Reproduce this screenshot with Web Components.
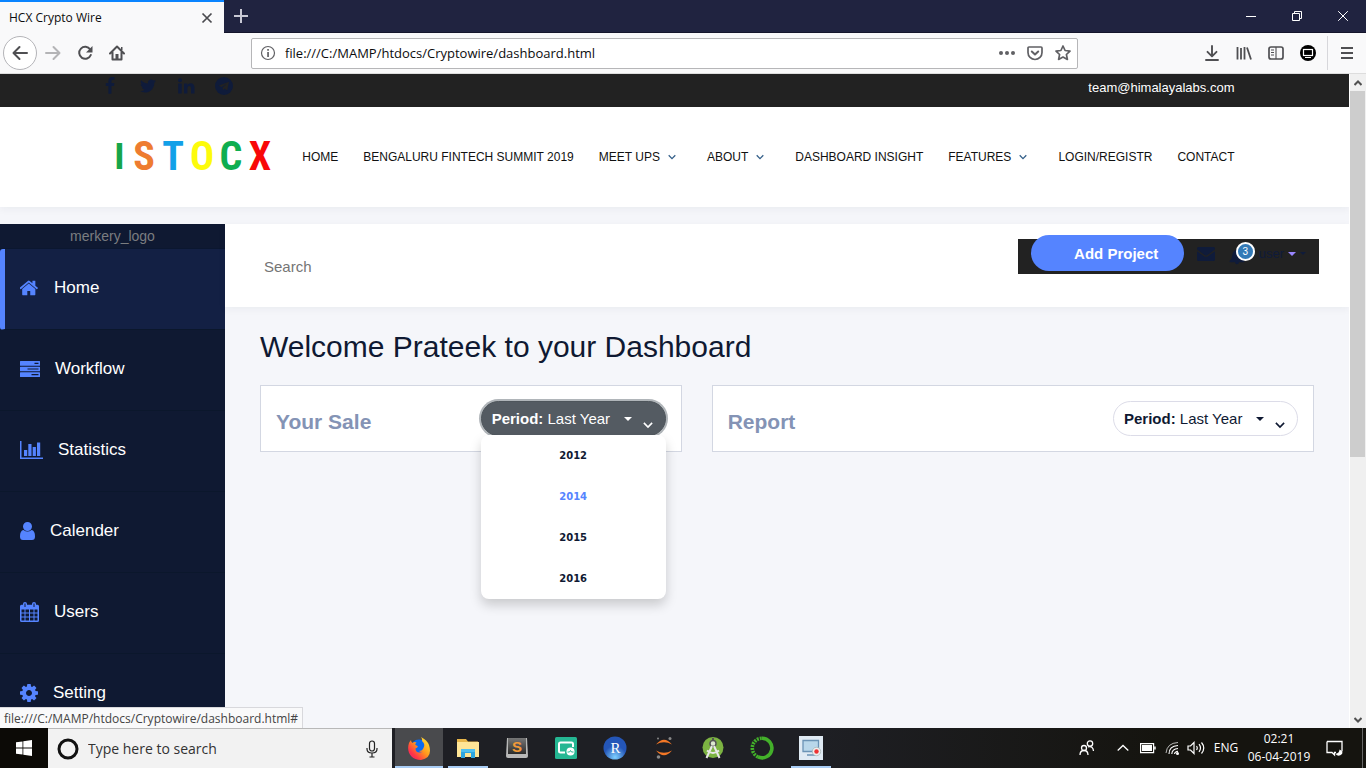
<!DOCTYPE html>
<html lang="en">
<head>
<meta charset="utf-8">
<title>HCX Crypto Wire</title>
<style>
html,body{margin:0;height:100%;overflow:hidden}
body{font-family:"Liberation Sans",Arial,sans-serif;--ui:"Open Sans","Noto Sans",sans-serif;--navy:#0f1932;--blue:#5584ff;--dark:#222}
</style>
</head>
<body>
<desktop-screen>
  <browser-tabs slot="tabs" label="HCX Crypto Wire"></browser-tabs>
  <browser-toolbar slot="toolbar" url="file:///C:/MAMP/htdocs/Cryptowire/dashboard.html"></browser-toolbar>
  <contact-bar slot="page" email="team@himalayalabs.com"></contact-bar>
  <site-nav slot="page"></site-nav>
  <dashboard-layout slot="page">
    <side-menu slot="side"></side-menu>
    <user-bar slot="main"></user-bar>
    <dashboard-board slot="main">
      <span slot="title">Welcome Prateek to your Dashboard</span>
      <report-card heading="Your Sale" open></report-card>
      <report-card heading="Report"></report-card>
    </dashboard-board>
  </dashboard-layout>
  <span slot="status">file:///C:/MAMP/htdocs/Cryptowire/dashboard.html#</span>
  <task-bar slot="taskbar"></task-bar>
</desktop-screen>
<script>
const ICONS = {
  close:['0 0 12 12','<path d="M1.500 1.500l9 9m0-9l-9 9" fill="none" stroke="currentColor" stroke-width="1.700"/>'],
  thinclose:['0 0 10 10','<path d="M.2 .2l9.600 9.600m0-9.600l-9.600 9.600" fill="none" stroke="currentColor"/>'],
  plus:['0 0 14 14','<path d="M7 0v14M0 7h14" fill="none" stroke="currentColor" stroke-width="2"/>'],
  min:['0 0 10 10','<path d="M0 5.500h10" stroke="currentColor"/>'],
  restore:['0 0 10 10','<path d="M.5 2.500h7v7h-7zM2.500 2.500v-2h7v7h-2" fill="none" stroke="currentColor"/>'],
  back:['0 0 16 16','<path d="M15 8H2M7.500 2L1.500 8l6 6" fill="none" stroke="currentColor" stroke-width="2" stroke-linecap="round" stroke-linejoin="round"/>'],
  forward:['0 0 16 16','<path d="M1 8h13M8.500 2l6 6-6 6" fill="none" stroke="currentColor" stroke-width="2" stroke-linecap="round" stroke-linejoin="round"/>'],
  reload:['0 0 16 16','<path d="M13.200 4.500A6 6 0 1 0 13.800 10" fill="none" stroke="currentColor" stroke-width="2" stroke-linecap="round"/><path d="M15.500 1v6.500H9z" fill="currentColor"/>'],
  house:['0 0 16 16','<path d="M1 8.500L8 1.500l7 7M3.500 7.500v7h9v-7" fill="none" stroke="currentColor" stroke-width="2" stroke-linejoin="round" stroke-linecap="round"/><path d="M6.500 9h3v5h-3zM12 2h1.500v3H12z" fill="currentColor"/>'],
  info:['0 0 16 16','<circle cx="8" cy="8" r="6.500" fill="none" stroke="currentColor" stroke-width="1.200"/><path d="M7.200 7h1.700v5H7.200zM7.200 4h1.700v1.700H7.200z" fill="currentColor"/>'],
  dots:['0 0 16 16','<g fill="currentColor"><circle cx="2" cy="8" r="2"/><circle cx="8" cy="8" r="2"/><circle cx="14" cy="8" r="2"/></g>'],
  pocket:['0 0 16 16','<path d="M2 2h12q1 0 1 1v4.500a7 7 0 0 1-14 0V3q0-1 1-1z" fill="none" stroke="currentColor" stroke-width="1.700"/><path d="M4.800 6.500L8 9.500l3.200-3" fill="none" stroke="currentColor" stroke-width="2" stroke-linecap="round" stroke-linejoin="round"/>'],
  star:['0 0 16 16','<path d="M8 1l2.100 4.500 4.900.6-3.600 3.400 1 4.900L8 12l-4.400 2.400 1-4.900L1 6.100l4.900-.6z" fill="none" stroke="currentColor" stroke-width="1.700" stroke-linejoin="round"/>'],
  download:['0 0 16 16','<path d="M8 1v10M3.500 6.800L8 11.300l4.500-4.500M2 15h12" fill="none" stroke="currentColor" stroke-width="1.900" stroke-linecap="round" stroke-linejoin="round"/>'],
  library:['0 0 16 16','<path d="M1.500 2v12.500M5 3v11.500M8.500 2v12.500M11 2.500l4 12" fill="none" stroke="currentColor" stroke-width="1.800"/>'],
  sidebar:['0 0 16 16','<rect x="1" y="2" width="14" height="12" rx="2" fill="none" stroke="currentColor" stroke-width="1.700"/><path d="M8 2v12M3 5h3M3 7.500h3M3 10h3" stroke="currentColor" stroke-width="1.100"/>'],
  monitor:['0 0 16 16','<circle cx="8" cy="8" r="8" fill="#000"/><rect x="3.500" y="4.500" width="9" height="6" fill="none" stroke="#fff" stroke-width="1.200"/><path d="M5 12.500h6" stroke="#fff"/>'],
  burger:['0 0 12 12','<path d="M0 1h12M0 6h12M0 11h12" stroke="currentColor" stroke-width="2"/>'],
  fb:['0 0 1792 1792','<path fill="currentColor" d="M1343 12v264h-157q-86 0-116 36t-30 108v189h293l-39 296h-254v759h-306v-759h-255v-296h255v-218q0-186 104-288.500t277-102.500q147 0 228 12z"/>'],
  tw:['0 0 1792 1792','<path fill="currentColor" d="M1684 408q-67 98-162 167 1 14 1 42 0 130-38 259.500t-115.500 248.500-184.500 210.500-258 146-323 54.500q-271 0-496-145 35 4 78 4 225 0 401-138-105-2-188-64.500t-114-159.500q33 5 61 5 43 0 85-11-112-23-185.500-111.500t-73.500-205.500v-4q68 38 146 41-66-44-105-115t-39-154q0-88 44-163 121 149 294.500 238.500t371.500 99.500q-8-38-8-74 0-134 94.500-228.500t228.500-94.500q140 0 236 102 109-21 205-78-37 115-142 178 93-10 186-50z"/>'],
  li:['0 0 18 18','<g fill="currentColor"><rect x="1.200" y="6.500" width="3.500" height="10"/><circle cx="3" cy="3.300" r="2"/><path d="M7 6.500h3.300V8q1-1.800 3.300-1.800 3.900 0 3.900 4.600v5.700H14v-5.300q0-2.300-1.700-2.300-1.900 0-1.900 2.300v5.300H7z"/></g>'],
  tg:['0 0 18 18','<circle cx="9" cy="9" r="9" fill="currentColor"/><path d="M3.600 8.800L14 4.700l-1.800 8.900-2.700-2-1.500 1.500-.3-2.500 4.300-4-5.400 3.400z" fill="#222"/>'],
  chev:['0 0 8 8','<path d="M.7 2.300L4 5.600l3.300-3.300" fill="none" stroke="currentColor" stroke-width="1.300"/>'],
  home:['80 200 1632 1400','<path fill="currentColor" d="M1408 992v480q0 26-19 45t-45 19h-384v-384h-256v384h-384q-26 0-45-19t-19-45v-480q0-1 .5-3t.5-3l575-474 575 474q1 2 1 6zm223-69l-62 74q-8 9-21 11h-3q-13 0-21-7l-692-577-692 577q-12 8-24 7-13-2-21-11l-62-74q-8-10-7-23.500t11-21.500l719-599q32-26 76-26t76 26l244 204v-195q0-14 9-23t23-9h192q14 0 23 9t9 23v408l219 182q10 8 11 21.500t-7 23.500z"/>'],
  tasks:['0 0 20 16','<path fill="currentColor" fill-rule="evenodd" d="M.5 0h19q.5 0 .5.500v3.800q0 .5-.5.500H.5q-.5 0-.5-.5V.5Q0 0 .5 0zm14 1.700v1.300h4V1.700zM.5 5.700h19q.5 0 .5.500v3.600q0 .5-.5.500H.5q-.5 0-.5-.5V6.200q0-.5.500-.5zm7 1.700v1.200h11V7.400zM.5 11.200h19q.5 0 .5.500v3.800q0 .5-.5.500H.5q-.5 0-.5-.5v-3.800q0-.5.500-.5zm11 1.800v1.200h7V13z"/>'],
  bars:['0 0 23 18','<path fill="currentColor" d="M0 0h1.500v16.500H23V18H0zM4 9h3.200v6H4zM8.300 3h3.200v12H8.300zM12.700 6h3.200v9h-3.200zM17 1.500h3.200V15H17z"/>'],
  person:['0 0 15 18','<path fill="currentColor" d="M7.500 0a4.500 4.500 0 0 1 0 9 4.500 4.500 0 0 1 0-9zM3.500 8q4 3 8 0Q15 8.500 15 14.500q0 3.500-3 3.500H3q-3 0-3-3.500Q0 8.500 3.500 8z"/>'],
  cal:['0 0 19 20','<path fill="currentColor" fill-rule="evenodd" d="M1.500 2.700H3V2q0-2 2-2t2 2v.7h5V2q0-2 2-2t2 2v.7h1.500Q19 2.700 19 4.200v14.300q0 1.500-1.500 1.500h-16Q0 20 0 18.500V4.200q0-1.500 1.500-1.500zM4.500 1.500V5h1V1.500zm9 0V5h1V1.500zM1.500 7.500v3h3v-3zm4 0v3h3.500v-3zm4.500 0v3h3.500v-3zm4.500 0v3h3v-3zM1.500 11.500v3h3v-3zm4 0v3h3.500v-3zm4.500 0v3h3.500v-3zm4.500 0v3h3v-3zM1.500 15.500v3h3v-3zm4 0v3h3.500v-3zm4.500 0v3h3.500v-3zm4.500 0v3h3v-3z"/>'],
  cog:['128 128 1536 1536','<path fill="currentColor" d="M1152 896q0-106-75-181t-181-75-181 75-75 181 75 181 181 75 181-75 75-181zm512-109v222q0 12-8 23t-20 13l-185 28q-19 54-39 91 35 50 107 138 10 12 10 25t-9 23q-27 37-99 108t-94 71q-12 0-26-9l-138-108q-44 23-91 38-16 136-29 186-7 28-36 28h-222q-14 0-24.500-8.500t-11.500-21.500l-28-184q-49-16-90-37l-141 107q-10 9-25 9-14 0-25-11-126-114-165-168-7-10-7-23 0-12 8-23 15-21 51-66.500t54-70.500q-27-50-41-99l-183-27q-13-2-21-12.500t-8-23.500v-222q0-12 8-23t19-13l186-28q14-46 39-92-40-57-107-138-10-12-10-24 0-10 9-23 26-36 98.500-107.500t94.500-71.500q13 0 26 10l138 107q44-23 91-38 16-136 29-186 7-28 36-28h222q14 0 24.500 8.500t11.500 21.500l28 184q49 16 90 37l142-107q9-9 24-9 13 0 25 10 129 119 165 170 7 8 7 22 0 12-8 23-15 21-51 66.500t-54 70.500q26 50 41 98l183 28q13 2 21 12.500t8 23.500z"/>'],
  mail:['0 0 18 14','<path fill="currentColor" d="M1.500 0h15Q18 0 18 1.500q0 1-1 1.800L10.500 8q-1.500 1-3 0L1 3.300q-1-.8-1-1.800Q0 0 1.500 0zM0 4.200l7 5q2 1.300 4 0l7-5v8.300q0 1.500-1.500 1.500h-15Q0 14 0 12.500z"/>'],
  bell:['0 0 18 18','<path fill="currentColor" d="M9 0q1.200 0 1.200 1.300Q14 2.200 14.300 7q.2 4.500 3.200 6.800 0 1.200-1.300 1.200h-5a2.200 2.200 0 0 1-4.400 0h-5Q.5 15 .5 13.800 3.500 11.500 3.700 7 4 2.200 7.800 1.300 7.800 0 9 0z"/>'],
  caret:['0 0 8 4','<path fill="currentColor" d="M0 0h8L4 4z"/>'],
  up:['0 0 8 8','<path d="M.5 6L4 2.500 7.500 6" fill="none" stroke="currentColor" stroke-width="2"/>'],
  down:['0 0 8 8','<path d="M.5 2L4 5.500 7.500 2" fill="none" stroke="currentColor" stroke-width="2"/>'],
  win:['0 0 16 16','<path fill="currentColor" d="M0 2.300L6.500 1.400v6.200H0zM7.300 1.300L16 0v7.600H7.300zM0 8.400h6.500v6.200L0 13.700zM7.300 8.400H16V16l-8.700-1.300z"/>'],
  ring:['0 0 22 22','<circle cx="11" cy="11" r="9" fill="none" stroke="#111" stroke-width="3"/>'],
  mic:['0 0 16 18','<g fill="none" stroke="currentColor" stroke-width="1.200"><rect x="5.500" y="1" width="5" height="10" rx="2.500"/><path d="M3 8v1q0 4 5 4t5-4V8M8 13v4M5.500 17h5"/></g>'],
  firefox:['0 0 24 24','<defs><linearGradient id="f" x1="1" y1="0" x2="0" y2="1"><stop offset="0" stop-color="#fff33e"/><stop offset=".45" stop-color="#ff9a1c"/><stop offset=".75" stop-color="#ff3647"/><stop offset="1" stop-color="#e4157b"/></linearGradient></defs><circle cx="12" cy="12" r="8.500" fill="#0a6bf0"/><path fill="url(#f)" d="M14 1q6 3 8 8 4 13-8 15C4 24-1 16 2 7q1-2 2-3 0 2 1.500 3Q7 5.500 9.500 6.500 7 8.500 9.500 9.500q3 1-1 3 0 4 4 4 2 0 3.500-1-2 1-4-.5 3 0 4-2 3-5-1-8Q15.500 3 14 1z"/>'],
  folder:['0 0 24 24','<path fill="#e8b64a" d="M1 3h9l2 2.500h10V10H1z"/><path fill="#ffe596" d="M1 6h22v15H1z"/><path fill="#2ea6e0" d="M5 13h14v9h-4v-5H9v5H5z"/><path fill="#4fc0f0" d="M5 13h14v3H5z"/>'],
  sublime:['0 0 24 24','<defs><linearGradient id="s" x2="0" y2="1"><stop stop-color="#777"/><stop offset="1" stop-color="#2c2c2c"/></linearGradient></defs><path fill="#b9b9b9" d="M2 2h20l1 18q0 2-2 2H3q-2 0-2-2z"/><path fill="url(#s)" d="M3 2h18v16H3z"/><text x="12" y="15.500" text-anchor="middle" font-family="Liberation Sans" font-weight="700" font-size="15" fill="#f29a38">S</text>'],
  greenapp:['0 0 24 24','<rect x="1" y="1" width="22" height="22" rx="1.500" fill="#25b793"/><path d="M19 11V8q0-1.500-1.500-1.500h-11Q5 6.500 5 8v7q0 1.500 1.500 1.500H11" fill="none" stroke="#fff" stroke-width="2"/><circle cx="16.500" cy="15.500" r="4" fill="#fff"/><path d="M13.500 16h2l1-1.500 1 1.500h2" fill="none" stroke="#25b793"/>'],
  rstudio:['0 0 24 24','<defs><radialGradient id="r" cy=".9"><stop stop-color="#7fd0ff"/><stop offset="1" stop-color="#2456b8"/></radialGradient></defs><circle cx="12" cy="12" r="11.500" fill="url(#r)"/><text x="12.500" y="17" text-anchor="middle" font-family="Liberation Serif" font-size="15" fill="#fff">R</text>'],
  jupyter:['0 0 24 24','<path fill="#f37726" d="M4 8.500Q12-1 20 8.500 12 4 4 8.500zM4 14.500q8 9.500 16 0-8 4.500-16 0z"/><g fill="#888"><circle cx="18" cy="2.500" r="1.500"/><circle cx="6" cy="2.500" r="1"/><circle cx="6.500" cy="21" r="1.800"/></g>'],
  android:['0 0 24 24','<circle cx="12" cy="11.500" r="10.500" fill="#7cb342"/><circle cx="12" cy="7.500" r="3" fill="#dce8d0" stroke="#555" stroke-width="1.500"/><path d="M11 10L5.500 22M13 10l5.500 12M6 14.500q6 5 12 0" fill="none" stroke="#e8e8e8" stroke-width="2"/><path d="M12 2v3" stroke="#555" stroke-width="2"/>'],
  anaconda:['0 0 24 24','<path d="M12 2.200a9.800 9.800 0 1 1-4 18.700" fill="none" stroke="#43b02a" stroke-width="3.600"/><path d="M8 20.900A9.800 9.800 0 0 1 12 2.200" fill="none" stroke="#43b02a" stroke-width="3.600" stroke-dasharray="2 1"/>'],
  recorder:['0 0 24 24','<path fill="#dfeaf3" d="M0 0h24v24H0z"/><path d="M4 4.500h15.500v11H4zM8 19h8" fill="#b9d7ea" stroke="#6b93b5" stroke-width="1.300"/><circle cx="17.500" cy="15.500" r="4.200" fill="#eee" stroke="#9aa" stroke-width=".6"/><circle cx="17.500" cy="15.500" r="2.200" fill="#e33"/>'],
  people:['0 0 16 16','<g fill="none" stroke="currentColor" stroke-width="1.300"><circle cx="11" cy="3.500" r="2.700"/><path d="M9 7q5-1.500 5.500 4"/><circle cx="5" cy="8" r="2.500"/><path d="M1 15q0-4.500 4-4.500T9 15"/></g>'],
  trayup:['0 0 12 12','<path d="M.7 8.500L6 3.500l5.300 5" fill="none" stroke="currentColor" stroke-width="1.300"/>'],
  battery:['0 0 16 16','<path d="M.6 3.600h13v9H.6z" fill="none" stroke="currentColor" stroke-width="1.200"/><path fill="currentColor" d="M2 5h10v6H2zM14.200 6.500h1.500v3h-1.500z"/>'],
  wifi:['0 0 14 14','<g fill="none" stroke="currentColor"><path d="M1 12Q2 2 13 1.500" opacity=".7"/><path d="M4 13Q4 5 13 4.500M6.800 13Q7 8 13 7.500M9.500 13q.5-2.500 3.500-2.700" stroke-width="1.100"/></g><circle cx="12.500" cy="12.500" r="1.500" fill="currentColor"/>'],
  volume:['0 0 18 14','<path d="M1 5h2.500L7 1.500v11L3.500 9H1zM9.500 5q1.500 2 0 4M12 3.200q3 3.800 0 7.600M14.500 1.500q4.500 5.500 0 11" fill="none" stroke="currentColor" stroke-width="1.200"/>'],
  notice:['0 0 17 17','<path d="M1 1.500h15v10M10 12.500l-1.500 0V15L6 12.500H1v-11" fill="none" stroke="currentColor" stroke-width="1.300"/><path fill="currentColor" d="M13.500 9.500q0 3.500-4 4.500 3 3.500 6.500 0 1.500-3-2.500-4.500z"/>']
};
const define = (name, render) => customElements.define(name, class extends HTMLElement {
  connectedCallback() {
    if (this.shadowRoot) return;
    this.attachShadow({mode:'open'}).innerHTML = '<style>:host,*{box-sizing:border-box}button{border:0;background:none;padding:0;margin:0;color:inherit;font:inherit;display:flex;align-items:center;justify-content:center;flex:none}a{color:inherit;text-decoration:none}input{border:0;background:none;outline:0;min-width:0;padding:0;font:inherit;color:inherit}</style>' + render(this);
  }
});

define('ui-icon', el => {
  const [box, body] = ICONS[el.getAttribute('name')];
  const w = el.getAttribute('w') || 16, h = el.getAttribute('h') || w;
  return `<style>:host{display:block;flex:none;width:${w}px;height:${h}px}svg{display:block;width:100%;height:100%}</style><svg viewBox="${box}" aria-hidden="true">${body}</svg>`;
});

define('desktop-screen', () => `<style>
:host{display:flex;flex-direction:column;height:100vh}
.view{flex:1;min-height:0;display:flex;position:relative}
main{flex:1;min-width:0;overflow:hidden;background:#f5f6fa;display:flex;flex-direction:column}
.status{position:absolute;left:0;bottom:0;height:21px;padding:1px 4px 0;background:#f9f9fa;border:1px solid #d8d8dc;border-width:1px 1px 0 0;font:12px/20px var(--ui);color:#444;white-space:nowrap}
</style><slot name="tabs"></slot><slot name="toolbar"></slot>
<div class="view"><main><slot name="page"></slot></main><scroll-track></scroll-track><div class="status"><slot name="status"></slot></div></div>
<slot name="taskbar"></slot>`);

define('scroll-track', () => `<style>
:host{width:17px;display:grid;grid-template-rows:17px 1fr 17px;background:#f0f0f0;color:#505050;border-left:1px solid #fff;flex:none}
button{width:100%}.thumb{height:59%;background:#cdcdcd;margin-right:1px}
</style><button aria-label="Scroll up"><ui-icon name="up" w="8"></ui-icon></button><div><div class="thumb"></div></div><button aria-label="Scroll down"><ui-icon name="down" w="8"></ui-icon></button>`);

define('browser-tabs', el => `<style>
:host{display:flex;height:33px;background:#202340;border-bottom:1px solid #14152b;color:#fff;flex:none;font:12px/16px var(--ui)}
.tab{width:224px;height:33px;background:#f9f9fa;border-top:2px solid #0a84ff;color:#0c0c0d;display:flex;align-items:center;justify-content:space-between;padding:0 11px 0 9px}
.tab ui-icon{color:#4a4a4f}.new{width:34px;color:#c8c8d4}.gap{flex:1}.win{width:46px}
</style><div class="tab"><span>${el.getAttribute('label')}</span><button aria-label="Close tab"><ui-icon name="close" w="12"></ui-icon></button></div>
<button class="new" aria-label="New tab"><ui-icon name="plus" w="14"></ui-icon></button><div class="gap"></div>
<button class="win" aria-label="Minimize"><ui-icon name="min" w="10"></ui-icon></button><button class="win" aria-label="Restore"><ui-icon name="restore" w="10"></ui-icon></button><button class="win" aria-label="Close"><ui-icon name="thinclose" w="10"></ui-icon></button>`);

define('browser-toolbar', el => `<style>
:host{display:flex;align-items:center;height:41px;padding:0 3px;background:#f9f9fa;border-bottom:1px solid #ddd;color:#4f4f52;flex:none}
button{width:32px;height:32px}.back{width:34px;height:34px;border:1px solid #b4b4b8;border-radius:17px;background:#fff}.off{color:#b4b4b6}
.space{flex:1}.url{flex:7;height:31px;display:flex;align-items:center;border:1px solid #b6b6b8;border-radius:2px;background:#fff;color:#606064}
.url button{width:28px}.url .info{width:33px}.url input{flex:1;font:13px/20px var(--ui);color:#0c0c0d}
i{width:1px;height:34px;background:#d7d7db;margin:0 3px}
</style>
<button class="back" aria-label="Back"><ui-icon name="back"></ui-icon></button><button class="off" aria-label="Forward"><ui-icon name="forward"></ui-icon></button><button aria-label="Reload"><ui-icon name="reload"></ui-icon></button><button aria-label="Home"><ui-icon name="house"></ui-icon></button>
<div class="space"></div>
<div class="url"><button class="info" aria-label="Site information"><ui-icon name="info"></ui-icon></button><input aria-label="Address" value="${el.getAttribute('url')}"><button aria-label="Page actions"><ui-icon name="dots"></ui-icon></button><button aria-label="Save to Pocket"><ui-icon name="pocket"></ui-icon></button><button aria-label="Bookmark"><ui-icon name="star"></ui-icon></button></div>
<div class="space"></div>
${['download','library','sidebar','monitor'].map(n=>`<button aria-label="${n}"><ui-icon name="${n}"></ui-icon></button>`).join('')}<i></i><button aria-label="Menu"><ui-icon name="burger" w="12"></ui-icon></button>`);

define('contact-bar', el => `<style>
:host{display:block;background:var(--dark);height:33px;flex:none}
.wrap{max-width:1170px;margin:0 auto;padding:3px 25px 0 11px;display:flex;justify-content:space-between}
nav{display:flex;gap:20px;color:#0f1b3a}.mail{color:#fff;font-size:13px;line-height:22px}
</style><div class="wrap"><nav><a href="#" aria-label="Facebook"><ui-icon name="fb" w="18"></ui-icon></a><a href="#" aria-label="Twitter"><ui-icon name="tw" w="18"></ui-icon></a><a href="#" aria-label="LinkedIn"><ui-icon name="li" w="18"></ui-icon></a><a href="#" aria-label="Telegram"><ui-icon name="tg" w="18"></ui-icon></a></nav>
<a class="mail" href="mailto:${el.getAttribute('email')}">${el.getAttribute('email')}</a></div>`);

define('site-nav', () => `<style>
:host{display:block;height:100px;background:#fff;box-shadow:0 2px 8px rgba(20,30,60,.05);margin-bottom:17px;flex:none}
.wrap{max-width:1170px;height:100%;margin:0 auto;padding:0 25px 0 20px;display:flex;align-items:center;justify-content:space-between}
.logo{display:grid;grid-template-columns:20px repeat(5,29px);justify-items:center;font:bold 40px/40px "Roboto Condensed","Liberation Mono",monospace}
.logo span:first-child{font-family:"Liberation Sans",sans-serif;font-size:37px}
nav{display:flex;gap:25px;font-size:12px;line-height:20px;color:#111;white-space:nowrap}
nav a{display:flex;align-items:center}nav ui-icon{color:#35608a;margin:0 6px 0 8px}
</style><div class="wrap"><a class="logo" href="#">${[...'ISTOCX'].map((c,i)=>`<span style="color:${['#16a54a','#ee7c30','#12a0e8','#fdfb0a','#0fae50','#f80808'][i]}">${c}</span>`).join('')}</a>
<nav>${['HOME','BENGALURU FINTECH SUMMIT 2019','MEET UPS+','ABOUT+','DASHBOARD INSIGHT','FEATURES+','LOGIN/REGISTR','CONTACT'].map(t=>`<a href="#">${t.replace('+','')}${t.endsWith('+')?'<ui-icon name="chev" w="8"></ui-icon>':''}</a>`).join('')}</nav></div>`);

define('dashboard-layout', () => `<style>
:host{display:grid;grid-template-columns:225px 1fr;flex:1;min-height:0}
.main{min-width:0}
</style><slot name="side"></slot><div class="main"><slot name="main"></slot></div>`);

define('side-menu', () => `<style>
:host{display:block;background:var(--navy);color:#fff;min-height:0;overflow:hidden}
.logo{height:25px;line-height:25px;font-size:14px;text-align:center;color:#7b7d80;border-bottom:1px solid #0b1730}
nav a{display:flex;align-items:center;gap:15px;height:81px;padding:0 20px 3px;border-bottom:1px solid #0b172c;font-size:17px;line-height:20px}
nav a.on{background:#132044;border-left:5px solid var(--blue);padding-left:15px;border-radius:3px 0 0 3px}
nav ui-icon{color:var(--blue)}
</style><div class="logo">merkery_logo</div>
<nav>${[['home',19,16,'Home'],['tasks',20,16,'Workflow'],['bars',23,18,'Statistics'],['person',15,18,'Calender'],['cal',19,20,'Users'],['cog',18,18,'Setting']].map(([n,w,h,t],i)=>`<a href="#" class="${i?'':'on'}"><ui-icon name="${n}" w="${w}" h="${h}"></ui-icon>${t}</a>`).join('')}</nav>`);

define('user-bar', () => `<style>
:host{display:flex;justify-content:space-between;height:83px;padding:15px 30px 0 39px;background:#fff;box-shadow:0 2px 8px rgba(20,30,60,.05)}
input{width:300px;height:54px;font-size:15px}input::placeholder{color:#757575;opacity:1}
.tools{display:flex;align-items:center;height:35px;padding:0 13px;background:var(--dark);color:#0f1b3a}
.add{width:153px;height:36px;margin-top:-7px;border-radius:18px;background:var(--blue);color:#fff;font-size:15px;font-weight:700;padding-left:18px}
.mail{margin:0 14px 6px 13px}.bell{position:relative;width:30px;height:30px;justify-content:flex-start}
.badge{position:absolute;left:7px;top:0;width:19px;height:19px;border:2px solid #fff;border-radius:50%;background:#337ab7;color:#fff;font-size:10px;line-height:15px;text-align:center}
.user{gap:4px;font-size:13px;margin-bottom:6px}.user .p{color:#9a86ff}
</style><input type="search" placeholder="Search" aria-label="Search">
<div class="tools"><button class="add">Add Project</button><button class="mail" aria-label="Messages"><ui-icon name="mail" w="18" h="14"></ui-icon></button><button class="bell" aria-label="Notifications"><ui-icon name="bell" w="16"></ui-icon><span class="badge">3</span></button><button class="user">user<ui-icon class="p" name="caret" w="8" h="4"></ui-icon><ui-icon name="caret" w="6" h="3"></ui-icon></button></div>`);

define('dashboard-board', () => `<style>
:host{display:block;padding:20px}
h1{margin:0 15px 18px;font-size:30px;font-weight:400;line-height:40px;color:var(--navy)}
.row{display:grid;grid-template-columns:5fr 7fr}::slotted(report-card){margin:0 15px}
</style><h1><slot name="title"></slot></h1><div class="row"><slot></slot></div>`);

define('report-card', el => `<style>
:host{display:flex;justify-content:space-between;padding:15px;border:1px solid #d3d7e2;background:#fff}
h2{margin:0;padding-top:8px;font-size:21px;line-height:26px;font-weight:700;color:#8493b5}
</style><h2>${el.getAttribute('heading')}</h2><period-picker ${el.hasAttribute('open')?'open':''}></period-picker>`);

define('period-picker', el => `<style>
:host{display:block;position:relative;width:185px;height:35px;color:var(--navy)}
.pill{width:100%;height:35px;padding:0 12px 0 10px;border:1px solid #dcdce8;border-radius:18px;background:#fff;justify-content:flex-start;font-size:15px;line-height:20px;white-space:pre}
:host([open]) .pill{background:#545b62;border-color:#4e555b;color:#fff;box-shadow:0 0 0 2px #b0b5b9}
.c{margin-left:14px}.v{margin:12px 0 0 auto}
ul{position:absolute;z-index:2;left:0;right:0;top:34px;margin:0;padding:0;list-style:none;background:#fff;border-radius:8px;box-shadow:0 6px 12px rgba(0,0,0,.18);overflow:hidden}
li a{display:block;text-align:center;font:bold 10px/41px "DejaVu Sans",sans-serif}li a.on{color:var(--blue)}
</style><button class="pill" aria-haspopup="true" aria-expanded="${el.hasAttribute('open')}"><b>Period:</b> Last Year<ui-icon class="c" name="caret" w="8" h="4"></ui-icon><ui-icon class="v" name="chev" w="10"></ui-icon></button>
${el.hasAttribute('open')?`<ul>${[2012,2014,2015,2016].map(y=>`<li><a href="#" class="${y===2014?'on':''}">${y}</a></li>`).join('')}</ul>`:''}`);

define('task-bar', () => `<style>
:host{display:flex;height:40px;background:linear-gradient(90deg,#1e1f24 60%,#15140f 85%);color:#fff;font:12px/18px var(--ui);flex:none}
.start{width:48px;background:#0c0a06}
label{display:flex;align-items:center;width:344px;background:#f2f2f2;border-top:1px solid #b8b8b8;padding:0 12px 0 9px;color:#222;margin-right:3px}
label input{flex:1;font-size:14px;margin-left:9px}label input::placeholder{color:#333;opacity:1}
.apps{display:flex;gap:1px;flex:1}.apps button{width:48px;position:relative}.apps .on{background:#494a4d}
.apps .run::after{content:"";position:absolute;left:4px;right:4px;bottom:0;height:2px;background:#a9cdf5}.apps .on::after{left:0;right:0}
.tray{display:flex;align-items:center;flex:none}.people{width:46px}.more{width:26px}.t{width:24px}.lang{width:36px}.clock{display:block;width:70px;text-align:center}.n{width:40px}.peek{width:12px;padding-left:8px}.peek i{display:block;width:1px;height:40px;background:#666}
</style><button class="start" aria-label="Start"><ui-icon name="win"></ui-icon></button>
<label><ui-icon name="ring" w="22"></ui-icon><input placeholder="Type here to search" aria-label="Type here to search"><ui-icon name="mic" w="16" h="18"></ui-icon></label>
<div class="apps">${['firefox','folder','sublime','greenapp','rstudio','jupyter','android','anaconda','recorder'].map((n,i)=>`<button class="${i===0?'on run':i===1||i===8?'run':''}" aria-label="${n}"><ui-icon name="${n}" w="24"></ui-icon></button>`).join('')}</div>
<div class="tray"><button class="people" aria-label="People"><ui-icon name="people"></ui-icon></button><button class="more" aria-label="Hidden icons"><ui-icon name="trayup" w="12"></ui-icon></button><button class="t" aria-label="Battery"><ui-icon name="battery"></ui-icon></button><button class="t" aria-label="Network"><ui-icon name="wifi" w="14"></ui-icon></button><button class="t" aria-label="Volume"><ui-icon name="volume" w="18" h="14"></ui-icon></button><button class="lang">ENG</button><button class="clock">02:21<br>06-04-2019</button><button class="n" aria-label="Notifications"><ui-icon name="notice" w="17"></ui-icon></button><span class="peek"><i></i></span></div>`);
</script>
</body>
</html>
